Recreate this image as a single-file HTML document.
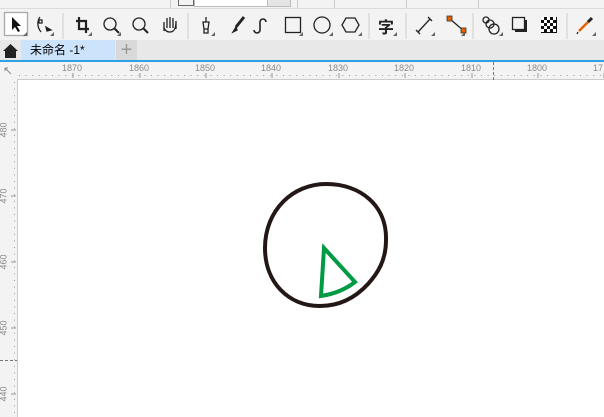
<!DOCTYPE html><html><head><meta charset="utf-8"><style>
body{margin:0;width:604px;height:417px;overflow:hidden;background:#f3f3f3;font-family:"Liberation Sans","Noto Sans CJK SC",sans-serif;position:relative}
.a{position:absolute}
.rl{position:absolute;font-size:9px;color:#8a8a8a}
</style></head><body>
<div class="a" style="left:0;top:0;width:604px;height:8px;background:#f3f3f3;border-bottom:1px solid #dcdcdc"></div>
<div class="a" style="left:170px;top:0;width:1px;height:8px;background:#ccc"></div>
<div class="a" style="left:178px;top:0;width:14px;height:5px;border:1px solid #666;border-top:none"></div>
<div class="a" style="left:194px;top:0;width:72px;height:6px;background:#fff;border:1px solid #bbb;border-top:none"></div>
<div class="a" style="left:267px;top:0;width:22px;height:6px;background:#e4e4e4;border:1px solid #bbb;border-top:none"></div>
<div class="a" style="left:297px;top:0;width:1px;height:8px;background:#ccc"></div>
<div class="a" style="left:334px;top:0;width:1px;height:8px;background:#ccc"></div>
<div class="a" style="left:406px;top:0;width:1px;height:8px;background:#ccc"></div>
<div class="a" style="left:478px;top:0;width:1px;height:8px;background:#ccc"></div>
<svg class="a" style="left:0;top:9px" width="604" height="32" fill="none" stroke="#222" stroke-width="1.3">
<rect x="4.5" y="3.5" width="23" height="23" fill="#fff" stroke="#aaa"/>
<path d="M12 8v13l3-3 3 5 2-1-3-5h4z" fill="#111" stroke="none"/>
<g fill="#666" stroke="none"><path d="M27 27v-4l-4 4z"/><path d="M54 27v-4l-4 4z"/><path d="M92 27v-4l-4 4z"/><path d="M121 27v-4l-4 4z"/><path d="M215 27v-4l-4 4z"/><path d="M303 27v-4l-4 4z"/><path d="M333 27v-4l-4 4z"/><path d="M362 27v-4l-4 4z"/><path d="M397 27v-4l-4 4z"/><path d="M435 27v-4l-4 4z"/><path d="M465 27v-4l-4 4z"/><path d="M503 27v-4l-4 4z"/><path d="M596 27v-4l-4 4z"/></g>
<path d="M40 8c-3 4-3 10 1 15"/><rect x="39" y="11" width="3" height="3" fill="#fff"/><path d="M46 18l5 3-4 1z" fill="#111"/>
<path d="M79 8v12h10M76 12h10v12" stroke-width="2.2"/>
<circle cx="110" cy="15" r="6"/><path d="M114 19l5 5" stroke-width="2"/>
<circle cx="139" cy="15" r="6"/><path d="M143 19l5 5" stroke-width="2"/>
<path d="M164 22v-9M167 19V9M170 19V8M173 19V9M176 20V12c0 8-2 11-6 11s-6-3-6-5"/>
<path d="M206 8v5M203 13h6l-1 7h-4z M204 20v4h4v-4"/>
<path d="M244 8l-8 10" stroke-width="3"/><path d="M236 18l-3 5 4-2z" fill="#222"/>
<path d="M266 13a3 3 0 0 0-6 0v8a3 3 0 0 1-6 0" stroke-width="1.6"/>
<rect x="285.5" y="8.5" width="15" height="15"/>
<circle cx="322" cy="16" r="8"/>
<path d="M346 9h9l4 7-4 7h-9l-4-7z"/>
<text x="378" y="24" font-size="16" font-weight="bold" fill="#222" stroke="none" font-family="Noto Sans CJK SC">字</text>
<path d="M418 23l12-13M416 21l4 4M428 8l4 4"/>
<path d="M450 10l14 12"/><rect x="447" y="7" width="5" height="5" fill="#e66000" stroke="#333" stroke-width="0.8"/><rect x="461" y="19" width="5" height="5" fill="#e66000" stroke="#333" stroke-width="0.8"/>
<circle cx="486" cy="11" r="3"/><circle cx="490" cy="15" r="4"/><circle cx="494" cy="20" r="5"/>
<rect x="512.5" y="8.5" width="12" height="12"/><path d="M526 11v11h-11" stroke-width="2"/>
<rect x="541" y="8" width="16" height="16" fill="#111" stroke="none"/>
<g fill="#fff" stroke="none"><rect x="541" y="8" width="3" height="3"/><rect x="547" y="8" width="3" height="3"/><rect x="553" y="8" width="3" height="3"/><rect x="544" y="11" width="3" height="3"/><rect x="550" y="11" width="3" height="3"/><rect x="541" y="14" width="3" height="3"/><rect x="547" y="14" width="3" height="3"/><rect x="553" y="14" width="3" height="3"/><rect x="544" y="17" width="3" height="3"/><rect x="550" y="17" width="3" height="3"/><rect x="541" y="20" width="3" height="3"/><rect x="547" y="20" width="3" height="3"/><rect x="553" y="20" width="3" height="3"/></g>
<path d="M579 22l9-9" stroke="#e66000" stroke-width="2.5"/><path d="M588 13l4-4" stroke-width="3"/><path d="M578 23l-1 2"/>
<g stroke="#d6d6d6"><path d="M63 4v26M188 4v26M369 4v26M406 4v26M473 4v26M567 4v26"/></g>
</svg>
<div class="a" style="left:0;top:40px;width:604px;height:21px;background:#e8e8e8"></div>
<svg class="a" style="left:2px;top:42px" width="17" height="17"><path d="M1 9l7.5-7 7.5 7h-2v7h-11v-7z" fill="#222"/></svg>
<div class="a" style="left:21px;top:40px;width:94px;height:21px;background:#cce4fb;font-size:12px;line-height:21px;padding-left:9px;box-sizing:border-box;color:#000">未命名 -1*</div>
<div class="a" style="left:116px;top:40px;width:21px;height:21px;background:#d9d9d9;color:#999;font-size:20px;line-height:20px;text-align:center">+</div>
<div class="a" style="left:0;top:60px;width:604px;height:2px;background:#2ea0e6"></div>
<div class="a" style="left:18px;top:80px;width:586px;height:337px;background:#fff"></div>
<div class="a" style="left:17px;top:79px;width:1px;height:338px;background:#ccc"></div>
<div class="a" style="left:17px;top:79px;width:587px;height:1px;background:#ccc"></div>
<svg class="a" style="left:0;top:62px" width="604" height="355">
<g fill="#888"><path id="tk" d=""/></g>
<g stroke="#999" stroke-width="1">
<path d="M19 13.5h590" stroke-dasharray="1 5.6"/>
<path d="M73 11v5M140 11v5M206 11v5M272 11v5M339 11v5M405 11v5M472 11v5M538 11v5M604 11v5"/>
<path d="M14.5 20v340" stroke-dasharray="1 5.6"/>
<path d="M11 68h5M11 134h5M11 200h5M11 266h5M11 332h5"/>
</g>
<g stroke="#777" stroke-dasharray="3 2"><path d="M493.5 0v18M0 298.5h17"/></g>
<path d="M5 6l6 6M5 6h3M5 6v3" stroke="#888"/>
</svg>
<span class="rl" style="left:62px;top:63px">1870</span><span class="rl" style="left:129px;top:63px">1860</span><span class="rl" style="left:195px;top:63px">1850</span><span class="rl" style="left:261px;top:63px">1840</span><span class="rl" style="left:328px;top:63px">1830</span><span class="rl" style="left:394px;top:63px">1820</span><span class="rl" style="left:461px;top:63px">1810</span><span class="rl" style="left:527px;top:63px">1800</span><span class="rl" style="left:593px;top:63px">17</span>
<span class="rl" style="left:-4px;top:125px;transform:rotate(-90deg)">480</span>
<span class="rl" style="left:-4px;top:191px;transform:rotate(-90deg)">470</span>
<span class="rl" style="left:-4px;top:257px;transform:rotate(-90deg)">460</span>
<span class="rl" style="left:-4px;top:323px;transform:rotate(-90deg)">450</span>
<span class="rl" style="left:-4px;top:389px;transform:rotate(-90deg)">440</span>
<svg class="a" style="left:0;top:0" width="604" height="417" fill="none">
<path d="M326 184c35 0 61 22 60 56c0 20-8 33-18 44c-12 13-28 22-48 22c-32 0-55-24-55-58c0-38 28-64 61-64z" stroke="#231815" stroke-width="4"/>
<path d="M324 248l-3 48c13-2 25-7 34-14z" stroke="#009944" stroke-width="4" stroke-linejoin="miter"/>
</svg>
</body></html>
